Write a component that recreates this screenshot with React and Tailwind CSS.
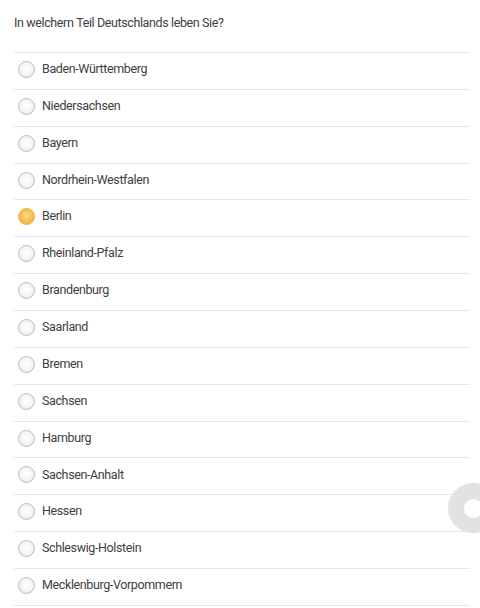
const regions = [
  "Baden-Württemberg",
  "Niedersachsen",
  "Bayern",
  "Nordrhein-Westfalen",
  "Berlin",
  "Rheinland-Pfalz",
  "Brandenburg",
  "Saarland",
  "Bremen",
  "Sachsen",
  "Hamburg",
  "Sachsen-Anhalt",
  "Hessen",
  "Schleswig-Holstein",
  "Mecklenburg-Vorpommern",
];

const Radio = ({ checked }) =>
  checked ? (
    <span className="w-[17px] h-[17px] rounded-full border border-[#eeb140] bg-[radial-gradient(circle_at_50%_45%,#fcd98a_0%,#f6bd4c_55%,#eeaa2e_100%)] shrink-0" />
  ) : (
    <span className="w-[17px] h-[17px] rounded-full border border-[#bdbdbd] bg-[radial-gradient(circle_at_50%_45%,#ffffff_0%,#f4f4f4_55%,#d6d6d6_100%)] shrink-0" />
  );

export default function App() {
  return (
    <div className="relative w-[480px] h-[608px] overflow-hidden bg-white font-['Roboto',sans-serif] text-[#404040] tracking-[-0.38px]">
      <div className="px-[14px] pt-[14px]">
        <div className="text-[12.5px] leading-[17px] h-[38px]">In welchem Teil Deutschlands leben Sie?</div>
        <div className="w-[456px] border-t border-[#e6e6e6]">
          {regions.map((r) => (
            <div key={r} className="flex items-center h-[36.87px] border-b border-[#e6e6e6] pl-[4px] pb-[3px] gap-[7px]">
              <Radio checked={r === "Berlin"} />
              <span className="text-[12.5px]">{r}</span>
            </div>
          ))}
        </div>
      </div>
      <div className="absolute left-[448px] top-[483px] w-[50px] h-[50px] rounded-full bg-[#e2e2e2] flex items-center justify-center">
        <div className="w-[19px] h-[19px] rounded-full bg-white" />
      </div>
    </div>
  );
}
